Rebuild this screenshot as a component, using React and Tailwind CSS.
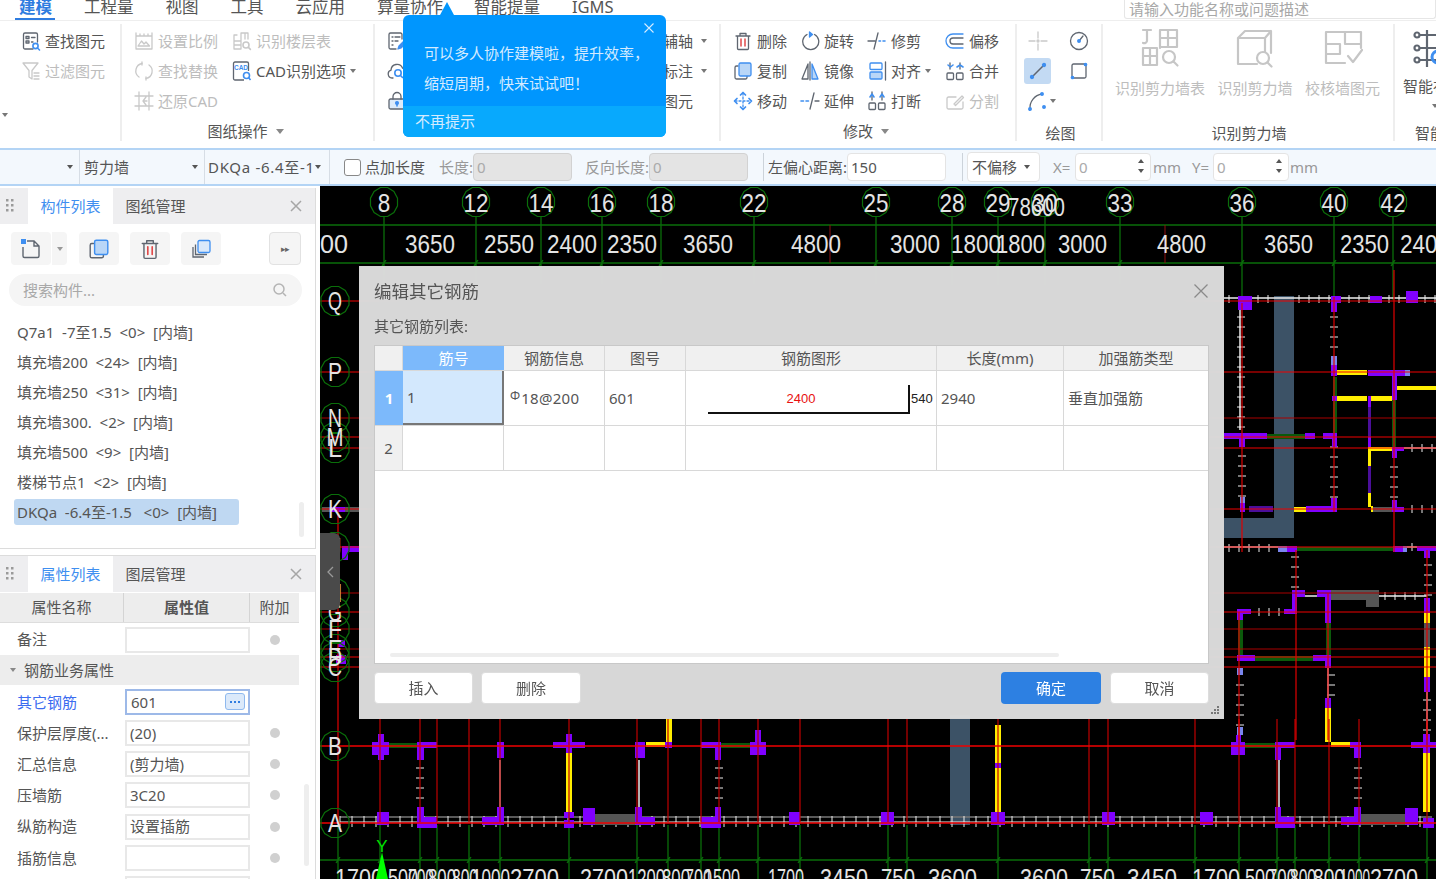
import React from 'react';

const INK = '#5f6670';
const BLUE = '#3f8ff0';
const OFF = '#c9c9c9';

// 20x20 ribbon icon shell
const Ic = ({ children, size = 20, box = 20, stroke = INK }) => (
  <svg width={size} height={size} viewBox={`0 0 ${box} ${box}`} fill="none" stroke={stroke} strokeWidth="1.3" strokeLinecap="round" strokeLinejoin="round" className="shrink-0">
    {children}
  </svg>
);

const Lens = ({ x = 15, y = 15, r = 2.6, c = BLUE }) => (
  <g stroke={c} strokeWidth="1.6">
    <circle cx={x} cy={y} r={r} fill="#fff" />
    <path d={`M${x + r - 0.6} ${y + r - 0.6}l2 2`} />
  </g>
);

const icons = {
  find: <Ic><path d="M12 18H4a1.5 1.5 0 0 1-1.5-1.5V3.5A1.5 1.5 0 0 1 4 2h11a1.5 1.5 0 0 1 1.5 1.5V11" /><path d="M5 5.5h3v2H5zM10.5 6.5h3.5M5 10h3v2H5zM10.5 11H12" /><Lens x={14.5} y={15} /></Ic>,
  filter: <Ic stroke={OFF}><path d="M2 2h15l-6 7.5V18l-3-2v-6.5zM13 12h5M13 15h5M13 18h5" /></Ic>,
  scale: <Ic stroke={OFF}><path d="M2 5h16v13H2zM2 2v3M6 3v2M10 3v2M14 3v2M18 2v3" /><path d="M4 15l3.5-5 2.5 3 2-2 3.5 4z" /></Ic>,
  floors: <Ic stroke={OFF}><path d="M2 10V4h3M9 2v8M9 2h7v6M13 2v6M2 10h7v8H2zM2 14h7" /><Lens x={14} y={14} r={3} c={OFF} /></Ic>,
  replace: <Ic stroke={OFF}><path d="M8 2.5A7.5 7.5 0 0 0 5 16M12 17.5A7.5 7.5 0 0 0 15 4" /><path d="M8 1v3M12 16v3" /></Ic>,
  cad: (
    <svg width="20" height="20" viewBox="0 0 20 20" fill="none" className="shrink-0">
      <path d="M12 19H3a1.5 1.5 0 0 1-1.5-1.5v-15A1.5 1.5 0 0 1 3 1h12a1.5 1.5 0 0 1 1.5 1.5V10" stroke={INK} strokeWidth="1.3" />
      <text x="9" y="8.5" textAnchor="middle" fontSize="6.5" fontWeight="700" fill={BLUE} fontFamily="Liberation Sans, sans-serif">CAD</text>
      <circle cx="14.5" cy="14.5" r="3" stroke={BLUE} strokeWidth="1.6" />
      <path d="M16.5 16.5l2 2.5" stroke={BLUE} strokeWidth="1.6" />
    </svg>
  ),
  restore: <Ic stroke={OFF}><path d="M5 1v18M15 1v18M1 5h18M1 15h18M12 6l-3 4 3 4M9 10h4" /></Ic>,
  list: <Ic><path d="M15 8V3.5A1.5 1.5 0 0 0 13.5 2H3.5A1.5 1.5 0 0 0 2 3.5v13A1.5 1.5 0 0 0 3.5 18H9" /><path d="M5 6h1M8 6h5M5 10h1M8 10h3M5 14h1" /><path d="M11 18l1-3 5-5 2 2-5 5z" stroke={BLUE} fill={BLUE} /></Ic>,
  cloud: <Ic><path d="M6 17H5a4 4 0 0 1-1-7.8A6 6 0 0 1 15.5 7 5 5 0 0 1 19 14" /><circle cx="11" cy="12" r="3.2" stroke={BLUE} strokeWidth="1.6" /><path d="M13.5 14.5l2 2" stroke={BLUE} strokeWidth="1.6" /></Ic>,
  lock: <Ic><rect x="2" y="8" width="16" height="10" rx="1.5" fill="#dceafa" /><path d="M6 8V5.5a4 4 0 0 1 8 0V8" /><circle cx="10" cy="12" r="1.4" fill={BLUE} stroke={BLUE} /><path d="M10 13v2" stroke={BLUE} strokeWidth="1.6" /></Ic>,
  trash: <Ic><path d="M3 5h14M7 5V2.5h6V5M4.5 5v12.5A1 1 0 0 0 5.5 18.500h9a1 1 0 0 0 1-1V5" /><path d="M8 8v7M12 8v7" stroke="#e04a4a" strokeWidth="1.5" /></Ic>,
  rotate: <Ic><path d="M7 3.500a8 8 0 1 0 7.500 0" /><path d="M9.500 1l3 2.500-3 2.500z" fill={BLUE} stroke={BLUE} /></Ic>,
  trim: <Ic><path d="M11 2L7 18M1 10h7" /><path d="M12 10h1.500M16 10h2" stroke={BLUE} strokeWidth="1.6" /></Ic>,
  offset: <Ic stroke={BLUE}><path d="M18 3H8a7 7 0 0 0 0 14h10" /><path d="M18 7H8a3 3 0 0 0 0 6h10" stroke={INK} /></Ic>,
  copy: <Ic><path d="M5 5H3.500A1.500 1.500 0 0 0 2 6.500v10A1.500 1.500 0 0 0 3.500 18h9a1.500 1.500 0 0 0 1.500-1.500V15" /><rect x="6" y="2" width="12" height="13" rx="1.500" fill="#b9d6f7" stroke={BLUE} /></Ic>,
  mirror: <Ic><path d="M8 3L2 18h6z" /><path d="M12 3l6 15h-6z" fill="#b9d6f7" stroke={BLUE} /><path d="M10 1v18" /></Ic>,
  align: <Ic><rect x="3" y="2" width="12" height="6.500" rx="1" stroke={BLUE} /><rect x="3" y="11" width="12" height="7" rx="1" fill="#b9d6f7" stroke={BLUE} /><path d="M18.500 1v18" /></Ic>,
  merge: <Ic><rect x="2" y="12" width="6.500" height="6.500" rx="1" /><rect x="11.500" y="12" width="6.500" height="6.500" rx="1" /><path d="M5 2v6M15 2v6" /><path d="M3 4l2.500 2L8 4M12 6l3-2 3 2" stroke={BLUE} strokeWidth="1.6" /></Ic>,
  move: <Ic stroke={BLUE}><path d="M10 2v16M2 10h16" strokeDasharray="2 2" /><path d="M7.500 4L10 1.500 12.500 4M7.500 16l2.500 2.500 2.500-2.500M4 7.500L1.500 10 4 12.500M16 7.500l2.500 2.500-2.500 2.500" strokeWidth="1.7" /></Ic>,
  extend: <Ic><path d="M14 2l-4 16M15 10h4" /><path d="M1 10h2.500M6 10h2.500" stroke={BLUE} strokeWidth="1.6" /></Ic>,
  breakup: <Ic><rect x="2" y="12" width="6.500" height="6.500" rx="1" /><rect x="11.500" y="12" width="6.500" height="6.500" rx="1" /><path d="M5 1v8M15 1v8" /><path d="M3 6l2-3 2 3M13 6l2-3 2 3" stroke={BLUE} strokeWidth="1.6" /></Ic>,
  split: <Ic stroke={OFF}><path d="M18 11v5.500a1.500 1.500 0 0 1-1.500 1.500h-13A1.500 1.500 0 0 1 2 16.500V7.500A1.500 1.500 0 0 1 3.500 6H11M9 13l8-8 1.500 1.500-8 8z" /></Ic>,
  point: <Ic stroke={OFF}><path d="M10 1v6M10 13v6M1 10h6M13 10h6" /><circle cx="10" cy="10" r="1" /></Ic>,
  circle: <Ic><circle cx="10" cy="10" r="8.500" /><path d="M10 10l4-5" /><circle cx="10" cy="10" r="1.300" fill={BLUE} stroke={BLUE} /></Ic>,
  line: <Ic size={20}><path d="M4 16L16 4" stroke={INK} strokeWidth="1.500" /><circle cx="4" cy="16" r="1.500" fill={BLUE} stroke={BLUE} /><circle cx="16" cy="4" r="1.500" fill={BLUE} stroke={BLUE} /></Ic>,
  rect: <Ic><rect x="3" y="3" width="14" height="14" rx="1.500" /><circle cx="16.500" cy="3.500" r="1.200" fill={BLUE} stroke={BLUE} /><circle cx="3.500" cy="16.500" r="1.200" fill={BLUE} stroke={BLUE} /></Ic>,
  arc: <Ic><path d="M3 18A14 14 0 0 1 15 3" /><circle cx="3" cy="18" r="1.300" fill={BLUE} stroke={BLUE} /><circle cx="15" cy="3" r="1.300" fill={BLUE} stroke={BLUE} /><circle cx="17" cy="16" r="1.300" fill={BLUE} stroke={BLUE} /></Ic>,
};

const big = {
  table: <Ic size={40} box={40} stroke="#c6c6c6"><path d="M3 20h14v17H3zM3 28h14M10 20v17M11 2H3M7 2v11a3 3 0 0 1-4 2M20 20V2h17v17H20M28 2v17M20 10h17" strokeWidth="2.200" /><circle cx="29" cy="29" r="6" strokeWidth="2.200" /><path d="M33.500 33.500l4 4" strokeWidth="2.200" /></Ic>,
  wall: <Ic size={40} box={40} stroke="#c6c6c6"><path d="M3 36V10h27v14M3 10l7-7h26v22M30 10l6-7M22 36H3" strokeWidth="2.200" /><circle cx="28" cy="30" r="6" strokeWidth="2.200" /><path d="M32.500 34.500l4 4" strokeWidth="2.200" /></Ic>,
  check: <Ic size={40} box={40} stroke="#c6c6c6"><path d="M22 35H3V4h35v16M22 4v12h16M3 16h14v10M3 26h14" strokeWidth="2.200" /><path d="M25 28l5 6 9-12" strokeWidth="2.200" /></Ic>,
};

const Caret = ({ color = '#777' }) => <span className="inline-block w-0 h-0 border-x-[3px] border-x-transparent border-t-[4px] shrink-0" style={{ borderTopColor: color }} />;

const Tool = ({ icon, label, off, caret }) => (
  <div className="flex items-center h-[30px] gap-1 whitespace-nowrap">
    {icons[icon]}
    <span className={off ? 'text-[#bdbdbd]' : 'text-[#555]'}>{label}</span>
    {caret && <Caret />}
  </div>
);

const GroupLabel = ({ children, caret, className = '' }) => (
  <div className={`mt-auto h-[20px] flex items-center justify-center gap-2 text-[#555] ${className}`}>
    {children}
    {caret && <span className="inline-block w-0 h-0 border-x-[4px] border-x-transparent border-t-[5px] border-t-[#888] shrink-0" />}
  </div>
);

const Ribbon = () => (
  <div className="flex h-[127px] pt-[3px] shrink-0 overflow-hidden">
    <div className="w-[122px] h-[117px] shrink-0 border-r-2 border-[#eee] pt-[2px] pl-[21px] relative">
      <Tool icon="find" label="查找图元" />
      <Tool icon="filter" label="过滤图元" off />
      <span className="absolute left-[2px] top-[76px]"><Caret /></span>
    </div>
    <div className="w-[253px] h-[117px] shrink-0 border-r-2 border-[#eee] pt-[2px] pl-[12px] flex flex-col">
      <div className="flex">
        <div className="w-[98px]">
          <Tool icon="scale" label="设置比例" off />
          <Tool icon="replace" label="查找替换" off />
          <Tool icon="restore" label="还原CAD" off />
        </div>
        <div>
          <Tool icon="floors" label="识别楼层表" off />
          <Tool icon="cad" label="CAD识别选项" caret />
        </div>
      </div>
      <GroupLabel caret className="pr-[16px]">图纸操作</GroupLabel>
    </div>
    <div className="w-[346px] h-[117px] shrink-0 border-r-2 border-[#eee] pt-[2px] pl-[12px] flex">
      <div className="w-[276px]">
        <div className="h-[30px] flex items-center">{icons.list}</div>
        <div className="h-[30px] flex items-center">{icons.cloud}</div>
        <div className="h-[30px] flex items-center">{icons.lock}</div>
      </div>
      <div className="text-[#555]">
        <div className="h-[30px] flex items-center gap-2">辅轴<Caret /></div>
        <div className="h-[30px] flex items-center gap-2">标注<Caret /></div>
        <div className="h-[30px] flex items-center">图元</div>
      </div>
    </div>
    <div className="w-[296px] h-[117px] shrink-0 border-r-2 border-[#eee] pt-[2px] pl-[12px] flex flex-col">
      <div className="flex">
        <div className="w-[67px]">
          <Tool icon="trash" label="删除" />
          <Tool icon="copy" label="复制" />
          <Tool icon="move" label="移动" />
        </div>
        <div className="w-[67px]">
          <Tool icon="rotate" label="旋转" />
          <Tool icon="mirror" label="镜像" />
          <Tool icon="extend" label="延伸" />
        </div>
        <div className="w-[78px]">
          <Tool icon="trim" label="修剪" />
          <Tool icon="align" label="对齐" caret />
          <Tool icon="breakup" label="打断" />
        </div>
        <div>
          <Tool icon="offset" label="偏移" />
          <Tool icon="merge" label="合并" />
          <Tool icon="split" label="分割" off />
        </div>
      </div>
      <GroupLabel caret className="pr-[16px]">修改</GroupLabel>
    </div>
    <div className="w-[86px] h-[117px] shrink-0 border-r-2 border-[#eee] pt-[2px] pl-[7px] flex flex-col">
      <div className="grid grid-cols-[27px_27px] gap-x-[14px] auto-rows-[30px] items-center justify-items-center">
        {icons.point}
        {icons.circle}
        <div className="w-[27px] h-[26px] bg-[#c3daf3] rounded-[3px] flex items-center justify-center">{icons.line}</div>
        {icons.rect}
        <div className="flex items-center gap-[3px] ml-[8px]">{icons.arc}<Caret /></div>
      </div>
      <GroupLabel className="pr-[4px] translate-y-[2px]">绘图</GroupLabel>
    </div>
    <div className="w-[292px] h-[117px] shrink-0 border-r-2 border-[#eee] pt-[4px] pl-[12px] flex flex-col">
      <div className="flex gap-[12px] text-[#bdbdbd]">
        <div className="w-[90px] flex flex-col items-center gap-[9px]">{big.table}<span>识别剪力墙表</span></div>
        <div className="w-[76px] flex flex-col items-center gap-[9px]">{big.wall}<span>识别剪力墙</span></div>
        <div className="w-[75px] flex flex-col items-center gap-[9px]">{big.check}<span>校核墙图元</span></div>
      </div>
      <GroupLabel className="pr-[10px] translate-y-[2px]">识别剪力墙</GroupLabel>
    </div>
    <div className="w-[41px] shrink-0 h-[117px] pt-[4px] pl-[8px] flex flex-col whitespace-nowrap text-[#555] overflow-hidden">
      <svg width="40" height="40" viewBox="0 0 40 40" fill="none" stroke={INK} strokeWidth="2.200" className="shrink-0 ml-[10px]">
        <path d="M14 2v37M7 7h23M7 20h23M7 32h23" />
        <circle cx="4" cy="7" r="2.500" />
        <circle cx="4" cy="20" r="2.500" />
        <circle cx="4" cy="32" r="2.500" />
        <circle cx="25" cy="29" r="6" stroke={BLUE} strokeWidth="3" />
      </svg>
      <span className="mt-[8px] leading-[20px]">智能布置</span>
      <div className="mt-[7px] ml-[29px] h-[6px] flex items-center"><Caret /></div>
      <div className="mt-auto h-[20px] flex items-center pl-[12px] translate-y-[2px]">智能</div>
    </div>
  </div>
);

const Field = ({ w, off, children, spin }) => (
  <div className={`relative h-[28px] rounded-[4px] border flex items-center px-[3px] ${off ? 'bg-[#e4e4e4] border-[#d2d2d2] text-[#aaa]' : 'bg-white border-[#e4e4e4] text-[#555]'} ${spin ? 'text-[#aaa]' : ''}`} style={{ width: w }}>
    {children}
    {spin && (
      <span className="absolute right-[6px] top-[5px] flex flex-col gap-[6px]">
        <span className="block w-0 h-0 border-x-[3px] border-x-transparent border-b-[4px] border-b-[#555]" />
        <span className="block w-0 h-0 border-x-[3px] border-x-transparent border-t-[4px] border-t-[#555]" />
      </span>
    )}
  </div>
);

const OptionBar = () => (
  <div className="h-[38px] shrink-0 flex items-center bg-[#f3f8fd] border-y-2 border-[#b3d4f5] text-[#555] whitespace-nowrap overflow-hidden">
    <div className="w-[80px] h-full border-r border-[#d6dde5] flex items-center justify-end pr-[6px]"><Caret color="#555" /></div>
    <div className="w-[125px] h-full border-r border-[#d6dde5] flex items-center justify-between pl-[4px] pr-[6px]">剪力墙<Caret color="#555" /></div>
    <div className="w-[125px] h-full border-r border-[#d6dde5] flex items-center justify-between pl-[3px] pr-[8px]"><span className="tracking-[0.7px]">DKQa -6.4至-1</span><Caret color="#555" /></div>
    <span className="ml-[14px] w-[17px] h-[17px] rounded-[3px] border border-[#888] bg-white shrink-0" />
    <span className="ml-[4px] w-[60px]">点加长度</span>
    <span className="ml-[14px] w-[34px] text-[#999]">长度:</span>
    <Field w={99} off>0</Field>
    <span className="ml-[13px] w-[64px] text-[#999]">反向长度:</span>
    <Field w={99} off>0</Field>
    <div className="ml-[15px] w-px h-[28px] bg-[#ccd3da]" />
    <span className="ml-[4px] w-[79px]">左偏心距离:</span>
    <Field w={99}>150</Field>
    <div className="ml-[16px] w-px h-[28px] bg-[#ccd3da]" />
    <div className="ml-[4px] w-[73px] h-[30px] rounded-[4px] border border-[#e4e4e4] bg-white flex items-center justify-between pl-[4px] pr-[9px]">不偏移<Caret color="#555" /></div>
    <span className="ml-[13px] w-[22px] text-[#999]">X=</span>
    <Field w={76} spin>0</Field>
    <span className="ml-[2px] w-[39px] text-[#999]">mm</span>
    <span className="w-[21px] text-[#999]">Y=</span>
    <Field w={76} spin>0</Field>
    <span className="ml-[1px] text-[#999]">mm</span>
  </div>
);

const Dots = () => (
  <svg width="8" height="16" viewBox="0 0 8 16" fill="#9a9a9a" className="shrink-0">
    {[1, 6].map((x) => [1, 6, 11].map((y) => <rect key={`${x}-${y}`} x={x - 1} y={y} width="2.500" height="2.500" />))}
  </svg>
);

const PanelHead = ({ active, other }) => (
  <div className="h-[36px] shrink-0 bg-[#eeeef0] flex items-stretch">
    <div className="w-[28px] flex items-center pl-[6px]"><Dots /></div>
    <div className="w-[85px] bg-white flex items-center justify-center text-[#3f8ff0]">{active}</div>
    <div className="w-[85px] flex items-center justify-center text-[#555]">{other}</div>
    <div className="ml-auto pr-[13px] flex items-center">
      <svg width="12" height="12" viewBox="0 0 12 12" stroke="#a6a6a6" strokeWidth="1.500"><path d="M1 1l10 10M11 1L1 11" /></svg>
    </div>
  </div>
);

const ToolBtn = ({ children, w = 40 }) => (
  <div className="h-[33px] bg-[#f5f5f5] rounded-[4px] flex items-center justify-center" style={{ width: w }}>{children}</div>
);

const listItems = ['Q7a1  -7至1.5  <0>  [内墙]', '填充墙200  <24>  [内墙]', '填充墙250  <31>  [内墙]', '填充墙300.  <2>  [内墙]', '填充墙500  <9>  [内墙]', '楼梯节点1  <2>  [内墙]'];

const propRows = [
  { name: '保护层厚度(...', value: '(20)' },
  { name: '汇总信息', value: '(剪力墙)' },
  { name: '压墙筋', value: '3C20' },
  { name: '纵筋构造', value: '设置插筋' },
  { name: '插筋信息', value: '' },
  { name: '', value: '' },
];

const PropRow = ({ name, value }) => (
  <div className="flex items-center h-[31.25px] shrink-0">
    <div className="w-[125px] pl-[17px] text-[#555] whitespace-nowrap">{name}</div>
    <div className="w-[125px] h-[26px] border-2 border-[#e8e8e8] flex items-center pl-[3px] text-[#555] bg-white whitespace-nowrap">{value}</div>
    <div className="w-[49px] flex justify-center"><span className="w-[10px] h-[10px] rounded-full bg-[#d0d0d0]" /></div>
  </div>
);

const LeftPanels = () => (
  <div className="w-[320px] shrink-0 flex flex-col bg-white">
    <div className="w-[316px] h-[361px] mt-[2px] shrink-0 border-r border-b border-[#dcdcdc] flex flex-col">
      <PanelHead active="构件列表" other="图纸管理" />
      <div className="flex items-center pl-[11px] mt-[8px]">
        <ToolBtn w={40}>
          <svg width="22" height="22" viewBox="0 0 22 22" fill="none" stroke={INK} strokeWidth="1.400"><path d="M7 3h7l5 5v10a1.500 1.500 0 0 1-1.500 1.500H4.500A1.500 1.500 0 0 1 3 18V9M14 3v5h5" /><rect x="1" y="1" width="5" height="5" fill={BLUE} stroke="none" /></svg>
        </ToolBtn>
        <div className="ml-px w-[15px] h-[33px] bg-[#f5f5f5] rounded-r-[4px] flex items-center justify-center"><Caret color="#999" /></div>
        <div className="ml-[12px]"><ToolBtn><div className="scale-110">{icons.copy}</div></ToolBtn></div>
        <div className="ml-[11px]"><ToolBtn><div className="scale-110">{icons.trash}</div></ToolBtn></div>
        <div className="ml-[11px]">
          <ToolBtn>
            <svg width="20" height="20" viewBox="0 0 20 20" fill="none" strokeWidth="1.300"><path d="M2 8v10h11" stroke={INK} /><path d="M4.500 5.500V15.500H16" stroke={INK} /><rect x="7" y="1.500" width="12" height="12" rx="1.500" fill="#dbe9fa" stroke={BLUE} /></svg>
          </ToolBtn>
        </div>
        <div className="ml-[48px] w-[32px] h-[33px] bg-[#f5f5f5] border border-[#e2e2e2] rounded-[4px] flex items-center justify-center text-[#666] text-[9px] tracking-[-1px]">▸▸</div>
      </div>
      <div className="ml-[9px] mt-[9px] w-[293px] h-[32px] rounded-full bg-[#f5f5f5] flex items-center justify-between pl-[14px] pr-[15px] text-[#a8a8a8]">
        搜索构件...
        <svg width="14" height="14" viewBox="0 0 14 14" fill="none" stroke="#b4b4b4" strokeWidth="1.500"><circle cx="6" cy="6" r="5" /><path d="M10 10l3 3" /></svg>
      </div>
      <div className="relative mt-[11px] pl-[14px]">
        {listItems.map((t) => (
          <div key={t} className="h-[30px] flex items-center pl-[3px] text-[#555] whitespace-pre">{t}</div>
        ))}
        <div className="w-[225px] h-[26px] mt-[2px] bg-[#bfd8f2] rounded-[3px] flex items-center pl-[3px] text-[#555] whitespace-pre">{'DKQa  -6.4至-1.5   <0>  [内墙]'}</div>
        <span className="absolute left-[299px] top-[185px] w-[5px] h-[35px] rounded-full bg-[#eeeeee]" />
      </div>
    </div>
    <div className="w-[316px] mt-[6px] flex-1 border-r border-t border-[#dcdcdc] flex flex-col relative overflow-hidden">
      <PanelHead active="属性列表" other="图层管理" />
      <div className="w-[299px] mt-[1px] h-[30px] shrink-0 flex bg-[#ededed] border-b border-[#ddd] text-[#555]">
        <div className="w-[124px] flex items-center justify-center border-r border-[#d4d4d4]">属性名称</div>
        <div className="w-[126px] flex items-center justify-center border-r border-[#d4d4d4] font-bold">属性值</div>
        <div className="w-[49px] flex items-center justify-center">附加</div>
      </div>
      <div className="w-[299px] mt-[1px]">
        <PropRow name="备注" value="" />
        <div className="h-[30px] bg-[#ededed] flex items-center pl-[10px] gap-[8px] text-[#555]"><Caret color="#888" />钢筋业务属性</div>
        <div className="flex items-center h-[31px] mt-[1px]">
          <div className="w-[125px] pl-[17px] text-[#3b6cf0]">其它钢筋</div>
          <div className="w-[125px] h-[26px] border-2 border-[#9db9e8] flex items-center justify-between pl-[4px] pr-[3px] text-[#555]">
            601
            <span className="w-[20px] h-[17px] rounded-[3px] bg-[#dbe9fa] border border-[#8fb9ee] flex items-center justify-center gap-[2px]">
              <i className="w-[2px] h-[2px] bg-[#2f7ce0]" /><i className="w-[2px] h-[2px] bg-[#2f7ce0]" /><i className="w-[2px] h-[2px] bg-[#2f7ce0]" />
            </span>
          </div>
        </div>
        {propRows.map((r, i) => <PropRow key={i} {...r} />)}
      </div>
      <span className="absolute left-[304px] top-[228px] w-[5px] h-[82px] rounded-full bg-[#eeeeee]" />
    </div>
  </div>
);

// ---- CAD drawing, in page coordinates ----
const P = '#8000ff', Y = '#ffee00', G = '#0b5a0b', D = '#4b0f9a', S = '#3c5266', K = '#555555', L = '#7a86ee';

const walls = [
  [1274, 296, 1294, 538, S], [1224, 518, 1294, 538, S], [950, 715, 970, 825, S],
  [1238, 296, 1252, 310, P], [1331, 296, 1341, 303, P], [1331, 296, 1337, 312, P], [1370, 296, 1382, 303, P], [1406, 291, 1418, 303, P],
  [1331, 356, 1337, 365, L], [1331, 365, 1337, 376, P], [1333, 377, 1337, 433, G],
  [1337, 370, 1367, 375, Y], [1368, 370, 1406, 376, P], [1405, 370, 1410, 376, L],
  [1392, 376, 1397, 400, P], [1397, 386, 1436, 390, Y],
  [1337, 396, 1367, 401, Y], [1332, 396, 1337, 401, P], [1371, 396, 1392, 401, Y], [1368, 396, 1371, 407, P], [1368, 407, 1371, 437, D], [1368, 437, 1371, 447, P],
  [1392, 400, 1396, 447, G], [1368, 447, 1392, 451, Y], [1392, 447, 1404, 451, P], [1392, 447, 1397, 458, P],
  [1368, 451, 1371, 466, Y], [1368, 466, 1371, 493, D], [1368, 493, 1371, 507, Y],
  [1224, 433, 1267, 439, P], [1239, 433, 1245, 447, P], [1267, 434, 1305, 439, G], [1305, 433, 1315, 439, P], [1323, 433, 1337, 439, P], [1332, 433, 1337, 447, P],
  [1240, 497, 1245, 512, P], [1240, 497, 1245, 503, L], [1249, 506, 1273, 512, D], [1294, 507, 1306, 512, Y], [1306, 506, 1337, 512, P], [1331, 498, 1337, 512, P],
  [1371, 506, 1373, 512, Y], [1373, 507, 1392, 512, K], [1392, 507, 1404, 512, P], [1392, 500, 1397, 512, P],
  [1278, 546, 1287, 552, L], [1287, 546, 1297, 552, P], [1297, 547, 1393, 551, G], [1393, 546, 1403, 552, P], [1403, 546, 1407, 552, L], [1417, 546, 1436, 551, P], [1424, 551, 1430, 558, P],
  [1292, 590, 1305, 597, P], [1292, 590, 1297, 613, P], [1284, 609, 1297, 614, P], [1317, 590, 1331, 597, P], [1325, 590, 1331, 623, P],
  [1331, 590, 1379, 600, K], [1366, 600, 1379, 607, K],
  [1237, 609, 1251, 614, P], [1237, 609, 1243, 620, P], [1238, 620, 1243, 655, G], [1237, 655, 1255, 661, P], [1255, 656, 1313, 661, G], [1313, 655, 1331, 661, P], [1325, 661, 1331, 668, P], [1326, 623, 1331, 655, G],
  [1237, 668, 1243, 675, L], [1237, 727, 1243, 735, L], [1325, 698, 1331, 708, P], [1325, 708, 1331, 742, Y],
  [1424, 598, 1430, 613, P], [1424, 613, 1430, 623, Y], [1424, 623, 1430, 647, K], [1424, 647, 1430, 677, Y], [1424, 677, 1430, 692, P], [1424, 735, 1430, 760, P],
  // row B
  [372, 742, 389, 755, P], [378, 734, 384, 760, P], [389, 743, 420, 748, G], [417, 742, 437, 748, P], [417, 742, 424, 760, P],
  [497, 742, 504, 758, P], [553, 742, 585, 748, P], [566, 734, 572, 753, P],
  [635, 742, 645, 758, P], [646, 742, 665, 747, Y], [665, 742, 672, 748, P], [666, 718, 672, 742, Y],
  [701, 742, 721, 748, P], [715, 742, 721, 760, P], [721, 743, 750, 748, G], [750, 742, 766, 755, P], [755, 730, 761, 742, P],
  [1231, 742, 1245, 755, P], [1236, 735, 1241, 742, P], [1245, 743, 1275, 748, G], [1275, 742, 1295, 748, P], [1275, 742, 1281, 760, P],
  [1331, 742, 1350, 747, Y], [1350, 742, 1361, 748, P], [1354, 742, 1361, 758, P],
  [1411, 742, 1436, 748, P], [1423, 734, 1430, 753, P],
  // verticals between B and A
  [566, 753, 572, 812, Y], [995, 725, 1001, 763, Y], [995, 763, 1001, 768, P], [995, 768, 1001, 812, Y], [1423, 753, 1430, 812, Y],
  // row A
  [377, 812, 389, 825, P], [417, 807, 424, 820, P], [417, 817, 437, 828, P],
  [497, 807, 504, 825, P], [482, 817, 504, 825, P],
  [564, 812, 574, 818, P], [564, 820, 574, 828, P], [583, 808, 595, 825, P], [595, 814, 637, 825, K],
  [635, 807, 642, 825, P], [635, 817, 655, 825, P], [701, 817, 721, 828, P], [715, 807, 721, 820, P],
  [789, 812, 800, 825, P], [881, 812, 894, 825, P], [991, 812, 1005, 825, P], [1102, 812, 1115, 825, P], [1200, 812, 1213, 825, P],
  [1275, 807, 1281, 820, P], [1275, 817, 1295, 828, P], [1341, 817, 1361, 825, P], [1354, 807, 1361, 825, P], [1361, 814, 1405, 825, K], [1405, 808, 1418, 825, P], [1423, 818, 1434, 828, P],
  // strip left of the dialog
  [322, 507, 359, 512, K], [330, 507, 345, 512, P], [342, 546, 359, 552, P], [342, 552, 348, 560, P], [338, 640, 345, 647, P], [336, 655, 346, 664, P],
];

const whiteRuns = [
  [1224, 298, 1436, 298], [1240, 303, 1240, 430], [1224, 547, 1278, 547], [1305, 596, 1317, 596], [1379, 596, 1427, 596], [1404, 448, 1436, 448],
  [1328, 668, 1328, 698], [1427, 692, 1427, 735], [1407, 547, 1417, 547], [500, 760, 500, 807], [639, 760, 639, 807], [1279, 760, 1279, 807],
];

const tickRuns = [
  // [x1, y1, x2, y2, step]
  [1229, 299, 1236, 299, 10], [1258, 299, 1270, 299, 10], [1299, 299, 1330, 299, 10], [1349, 299, 1369, 299, 10], [1389, 299, 1405, 299, 10], [1425, 299, 1436, 299, 10],
  [1241, 317, 1241, 430, 10], [1334, 317, 1334, 352, 10], [1334, 447, 1334, 497, 10], [1394, 467, 1394, 497, 10], [1242, 456, 1242, 497, 10], [1412, 448, 1436, 448, 10], [1412, 509, 1436, 509, 10],
  [1229, 548, 1270, 548, 10], [1412, 547, 1414, 547, 10], [1295, 557, 1295, 587, 10], [1259, 612, 1280, 612, 10], [1385, 596, 1420, 596, 10],
  [1428, 565, 1428, 595, 10], [1240, 685, 1240, 725, 10], [1331, 675, 1331, 695, 10], [1427, 700, 1427, 730, 10],
  [420, 768, 420, 802, 10], [719, 768, 719, 802, 10], [1358, 768, 1358, 802, 10],
];

const axisTop = [[384, '8'], [476, '12'], [541, '14'], [602, '16'], [661, '18'], [754, '22'], [876, '25'], [952, '28'], [998, '29'], [1045, '30'], [1120, '33'], [1242, '36'], [1334, '40'], [1393, '42']];
const dimTop = [[320, 348, '00'], [405, 455, '3650'], [484, 534, '2550'], [547, 597, '2400'], [607, 657, '2350'], [683, 733, '3650'], [791, 841, '4800'], [890, 940, '3000'], [951, 1001, '1800'], [996, 1045, '1800'], [1058, 1107, '3000'], [1157, 1206, '4800'], [1264, 1313, '3650'], [1340, 1389, '2350'], [1400, 1450, '2400']];
const axisLeft = [[301, 'Q'], [372, 'P'], [418, 'N'], [437, 'M'], [448, 'L'], [509, 'K'], [547, 'J'], [593, 'H'], [612, 'G'], [629, 'F'], [649, 'E'], [657, 'D'], [667, 'C'], [746, 'B'], [823, 'A']];
const dimBottom = [[335, 383, '1700'], [388, 418, '500'], [408, 434, '700'], [428, 456, '800'], [452, 478, '800'], [472, 510, '1000'], [510, 559, '2700'], [580, 628, '2700'], [628, 665, '1200'], [662, 690, '800'], [685, 712, '700'], [704, 740, '1500'], [768, 804, '1700'], [820, 868, '3450'], [881, 915, '750'], [928, 977, '3600'], [1020, 1068, '3600'], [1080, 1115, '750'], [1127, 1177, '3450'], [1192, 1240, '1700'], [1245, 1275, '500'], [1268, 1296, '700'], [1290, 1316, '800'], [1313, 1345, '800'], [1340, 1370, '1000'], [1370, 1418, '2700']];
const bottomX = [338, 380, 420, 437, 469, 500, 569, 637, 668, 701, 719, 758, 800, 888, 907, 998, 1089, 1108, 1195, 1239, 1277, 1295, 1329, 1359, 1427];
const darkRed = new Set([418, 593, 629, 649]);

const poly = (cx, cy, rx, ry) => Array.from({ length: 12 }, (_, i) => {
  const a = (Math.PI / 6) * i + Math.PI / 12;
  return `${(cx + rx * Math.cos(a)).toFixed(1)},${(cy + ry * Math.sin(a)).toFixed(1)}`;
}).join(' ');

const Ticks = () => {
  const out = [];
  tickRuns.forEach(([x1, y1, x2, y2, step], i) => {
    if (y1 === y2) {
      for (let x = x1; x <= x2; x += step) out.push(<path key={`${i}-${x}`} d={`M${x} ${y1 - 4}v8`} />);
    } else {
      for (let y = y1; y <= y2; y += step) out.push(<path key={`${i}-${y}`} d={`M${x1 - 4} ${y}h8`} />);
    }
  });
  for (let x = 340; x < 1432; x += 12) out.push(<path key={`a${x}`} d={`M${x} 816v11`} />);
  return <g stroke="#eeeeee" strokeWidth="1">{out}</g>;
};

const CadDrawing = () => (
  <svg width="1116" height="693" viewBox="320 186 1116 693" fill="none" className="block" fontFamily="Liberation Sans, sans-serif">
    {/* axis rails */}
    <g stroke="#0a6e0a" strokeWidth="1.300">
      <path d="M320 225H1436M320 263H1436M320 860H1436" />
      {axisTop.map(([x]) => <path key={x} d={`M${x} 217V300M${x - 2} 266l4 -6`} />)}
      {bottomX.map((x) => <path key={x} d={`M${x} 825V879M${x - 2} 863l4 -6`} />)}
    </g>
    <path d="M830 225V263M1165 225V263" stroke="#8c1010" />
    {walls.slice(0, 3).map(([a, b, c, d, f], i) => <rect key={i} x={a} y={b} width={c - a} height={d - b} fill={f} />)}
    <path d="M340 817H1432" stroke="#777" strokeWidth="1.500" />
    <path d="M340 822H1432" stroke="#eee" />
    <g stroke="#eeeeee" strokeWidth="1.500">
      {whiteRuns.map(([a, b, c, d], i) => <path key={i} d={`M${a} ${b}L${c} ${d}`} />)}
    </g>
    <Ticks />
    {walls.slice(3).map(([a, b, c, d, f], i) => <rect key={i} x={a} y={b} width={c - a} height={d - b} fill={f} />)}
    {/* red centre lines */}
    <g strokeWidth="1.200">
      {bottomX.slice(1).map((x) => <path key={x} d={`M${x} 719V822`} stroke="#c00000" />)}
      {axisLeft.map(([y]) => <path key={y} d={`M320 ${y}H1436`} stroke={darkRed.has(y) ? '#a80000' : '#f00000'} strokeWidth={y === 746 || y === 823 ? 1.7 : 1.2} />)}
      <path d="M338 510V822M1242 303V552M1334 297V512M1394 270V552M1296 550V740M1328 593V740M1427 550V740M1239 612V740" stroke="#e00000" />
    </g>
    {/* bubbles and numbers */}
    <g stroke="#0a6e0a" strokeWidth="1.200">
      {axisTop.map(([x]) => <polygon key={x} points={poly(x, 202, 14, 15)} />)}
      {axisLeft.map(([y]) => <polygon key={y} points={poly(335, y, 14.500, 15)} />)}
    </g>
    <g fill="#e4e4e4" fontSize="26">
      {axisTop.map(([x, t]) => <text key={t} x={x} y={212} textAnchor="middle" textLength={t.length * 12.500} lengthAdjust="spacingAndGlyphs">{t}</text>)}
      {dimTop.map(([a, b, t]) => <text key={`${a}`} x={a} y={253} textLength={b - a} lengthAdjust="spacingAndGlyphs">{t}</text>)}
      <text x={1008} y={216} textLength={57} lengthAdjust="spacingAndGlyphs">78600</text>
      {axisLeft.map(([y, t]) => <text key={t} x={335} y={y + 9} textAnchor="middle" textLength={t === 'M' ? 17 : 14} lengthAdjust="spacingAndGlyphs">{t}</text>)}
      {dimBottom.map(([a, b, t]) => <text key={`${a}`} x={a} y={887} textLength={b - a} lengthAdjust="spacingAndGlyphs">{t}</text>)}
    </g>
    {/* Y origin marker */}
    <text x={382} y={852} textAnchor="middle" fill="#00e000" fontSize="17">Y</text>
    <path d="M382 852L388 879H376Z" fill="#00ff00" />
  </svg>
);

const cols = 'grid grid-cols-[28px_101px_101px_81px_251px_127px_144px]';

const RebarDialog = () => (
  <div className="absolute left-[39px] top-[80px] w-[865px] h-[453px] bg-[#e4e4e4]/[0.94] backdrop-blur-xl border border-[#d6d6d6] flex flex-col px-[14px] text-[#555]">
    <div className="h-[48px] shrink-0 flex items-center justify-between">
      <span className="text-[17.500px]">编辑其它钢筋</span>
      <svg width="16" height="16" viewBox="0 0 16 16" stroke="#8a8a8a" strokeWidth="1.300"><path d="M1.500 1.500l13 13M14.500 1.500l-13 13" /></svg>
    </div>
    <div className="h-[30px] shrink-0 flex items-start -mt-[9px] pt-[9px]">其它钢筋列表:</div>
    <div className="relative h-[319px] w-[835px] mt-[9px] shrink-0 bg-white border border-[#c8c8c8]">
      <div className={`${cols} h-[25px] bg-[#f0f0f0] border-b border-[#d8d8d8]`}>
        <div className="border-r border-[#d8d8d8]" />
        <div className="bg-[#7cb9fb] text-white flex items-center justify-center">筋号</div>
        {['钢筋信息', '图号', '钢筋图形', '长度(mm)', '加强筋类型'].map((t) => (
          <div key={t} className="border-r last:border-r-0 border-[#d8d8d8] flex items-center justify-center">{t}</div>
        ))}
      </div>
      <div className={`${cols} h-[55px] border-b border-[#d8d8d8]`}>
        <div className="bg-[#7cb9fb] text-white font-bold flex items-center justify-center">1</div>
        <div className="bg-[#d3e8fd] border-r-2 border-b-2 border-[#777] flex items-center pl-[4px]">1</div>
        <div className="border-r border-[#d8d8d8] flex items-center pl-[6px]"><span className="text-[12px] -mt-[5px] mr-[1px]">Φ</span><span className="tracking-[0.3px]">18@200</span></div>
        <div className="border-r border-[#d8d8d8] flex items-center pl-[4px]">601</div>
        <div className="border-r border-[#d8d8d8] relative">
          <svg width="251" height="54" viewBox="0 0 251 54" fill="none" className="block">
            <path d="M22 42H223V14" stroke="#111" strokeWidth="2" />
            <text x="115" y="32" textAnchor="middle" fontSize="13" fill="#e81010" fontFamily="Liberation Sans, sans-serif">2400</text>
            <text x="225" y="32" fontSize="13" fill="#222" fontFamily="Liberation Sans, sans-serif">540</text>
          </svg>
        </div>
        <div className="border-r border-[#d8d8d8] flex items-center pl-[4px]">2940</div>
        <div className="flex items-center pl-[4px]">垂直加强筋</div>
      </div>
      <div className={`${cols} h-[45px] border-b border-[#d8d8d8]`}>
        <div className="bg-[#f0f0f0] border-r border-[#d8d8d8] flex items-center justify-center">2</div>
        {[0, 1, 2, 3, 4].map((i) => <div key={i} className="border-r border-[#d8d8d8]" />)}
        <div />
      </div>
      <span className="absolute left-[15px] bottom-[6px] w-[669px] h-[4px] rounded-full bg-[#eeeeee]" />
    </div>
    <div className="mt-[8px] flex h-[32px] w-[835px] gap-[8px] shrink-0">
      <button className="w-[99px] bg-white border border-[#ddd] rounded-[4px] text-[#555]">插入</button>
      <button className="w-[100px] bg-white border border-[#ddd] rounded-[4px] text-[#555]">删除</button>
      <button className="ml-auto w-[100px] bg-[#2d80e2] rounded-[4px] text-white">确定</button>
      <button className="ml-[1px] w-[99px] bg-white border border-[#ddd] rounded-[4px] text-[#555]">取消</button>
    </div>
    <svg width="10" height="10" viewBox="0 0 10 10" fill="#777" className="absolute right-[3px] bottom-[3px]">
      <rect x="7" y="1" width="2" height="2" /><rect x="4" y="4" width="2" height="2" /><rect x="7" y="4" width="2" height="2" /><rect x="1" y="7" width="2" height="2" /><rect x="4" y="7" width="2" height="2" /><rect x="7" y="7" width="2" height="2" />
    </svg>
  </div>
);

const CollabTip = () => (
  <div className="absolute left-[403px] top-[15px] w-[263px] h-[122px] z-10">
    <span className="absolute left-[37px] -top-[13px] w-0 h-0 border-x-[7px] border-x-transparent border-b-[13px] border-b-[#0096fe]" />
    <div className="h-full rounded-[6px] overflow-hidden bg-[#0096fe] flex flex-col text-[#d4ebff]">
      <div className="h-[91px] relative pl-[21px] pt-[23px] leading-[30px] whitespace-nowrap">
        <div>{'可以多人协作建模啦\uFF0C提升效率\uFF0C'}</div>
        <div>{'缩短周期\uFF0C快来试试吧\uFF01'}</div>
        <svg width="10" height="10" viewBox="0 0 10 10" stroke="#d4ebff" strokeWidth="1.100" className="absolute right-[12px] top-[8px]"><path d="M0.500 0.500l9 9M9.500 0.500l-9 9" /></svg>
      </div>
      <div className="flex-1 bg-[#08a9fd] flex items-center pl-[12px]">不再提示</div>
    </div>
  </div>
);

const tabs = [
  ['建模', 'ml-[19px]'], ['工程量', 'ml-[32px]'], ['视图', 'ml-[32px]'], ['工具', 'ml-[32px]'], ['云应用', 'ml-[32px]'], ['算量协作', 'ml-[32px]'], ['智能提量', 'ml-[31px]'], ['IGMS', 'ml-[32px]'],
];

export default function App() {
  return (
    <div className="relative w-[1436px] h-[879px] overflow-hidden bg-white flex flex-col text-[15px] font-['Noto_Sans','Noto_Sans_CJK_SC',sans-serif]">
      <div className="h-[21px] shrink-0 flex items-start border-b border-[#eeeeee] relative">
        {tabs.map(([t, m], i) => (
          <span key={t} className={`${m} text-[16.500px] leading-[16px] -mt-[1px] whitespace-nowrap ${i === 0 ? 'text-[#2f7ce0] font-bold' : 'text-[#555]'}`}>{t}</span>
        ))}
        <span className="absolute left-[15px] top-[18px] w-[40px] h-[2px] bg-[#2f7ce0]" />
        <div className="ml-auto w-[312px] h-[19px] border border-t-0 border-[#e6e6e6] rounded-b-[3px] pl-[4px] flex items-center text-[15px] text-[#a8a8a8] whitespace-nowrap overflow-hidden">请输入功能名称或问题描述</div>
      </div>
      <Ribbon />
      <OptionBar />
      <div className="flex flex-1 min-h-0">
        <LeftPanels />
        <div className="relative flex-1 bg-black overflow-hidden">
          <CadDrawing />
          <div className="absolute left-0 top-[347px] w-[20px] h-[77px] bg-[#4a4a4a] rounded-r-[6px] flex items-center justify-center">
            <svg width="7" height="12" viewBox="0 0 7 12" fill="none" stroke="#9a9a9a" strokeWidth="1.300"><path d="M6 1L1 6l5 5" /></svg>
          </div>
          <RebarDialog />
        </div>
      </div>
      <CollabTip />
    </div>
  );
}
